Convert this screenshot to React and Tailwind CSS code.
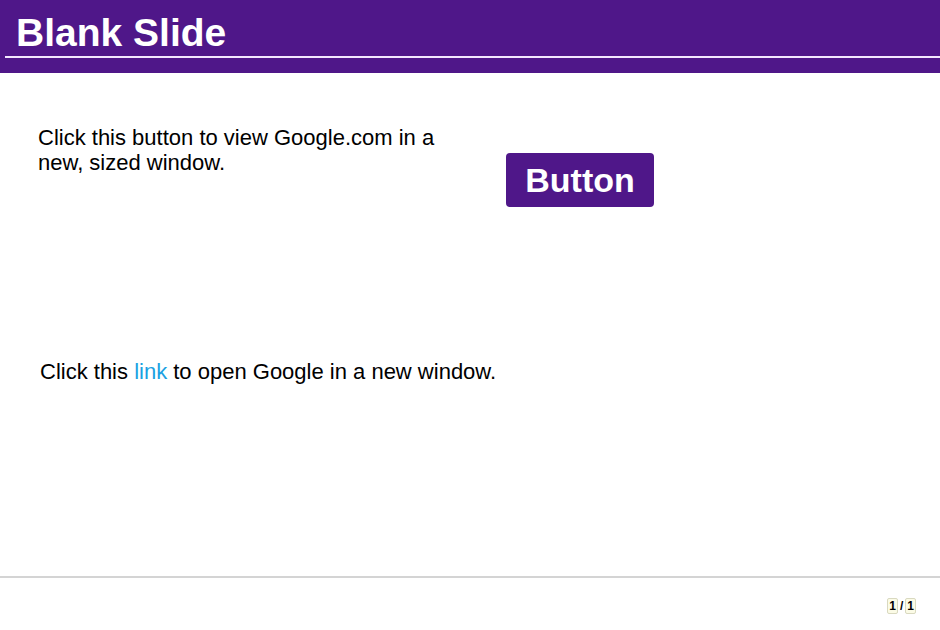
export default function App() {
  return (
    <div className="w-[940px] h-[630px] bg-white flex flex-col font-['Liberation_Sans',Arial,sans-serif] text-black overflow-hidden">
      <header className="h-[73px] bg-[#4f1789] flex flex-col pt-[9px]">
        <h1 className="pl-[16px] text-[39px] leading-[47px] font-bold text-white">Blank Slide</h1>
        <div className="ml-[5px] h-[2px] bg-[#f3e8ff]" />
      </header>

      <main className="flex-1 flex flex-col">
        <div className="flex pt-[52px]">
          <p className="pl-[38px] w-[460px] text-[22px] leading-[25px]">
            Click this button to view Google.com in a new, sized window.
          </p>
          <div className="pl-[46px] pt-[28px]">
            <button className="w-[148px] h-[54px] rounded-[4px] bg-[#4f1789] text-white font-bold text-[34px] leading-none">
              Button
            </button>
          </div>
        </div>
        <p className="pl-[40px] mt-[152px] text-[22px] leading-[25px]">
          Click this <a className="text-[#1ba1e2]">link</a> to open Google in a new window.
        </p>
      </main>

      <footer className="h-[54px] border-t-2 border-[#d4d4d4] flex items-start justify-end pr-[24px] pt-[20px]">
        <div className="flex items-center gap-[2px] text-[12px] font-bold leading-none">
          <span className="px-[1px] py-[1px] bg-[#fbfbe6] border border-[#d9d9c0] rounded-[2px]">1</span>
          <span>/</span>
          <span className="px-[1px] py-[1px] bg-[#fbfbe6] border border-[#d9d9c0] rounded-[2px]">1</span>
        </div>
      </footer>
    </div>
  );
}
